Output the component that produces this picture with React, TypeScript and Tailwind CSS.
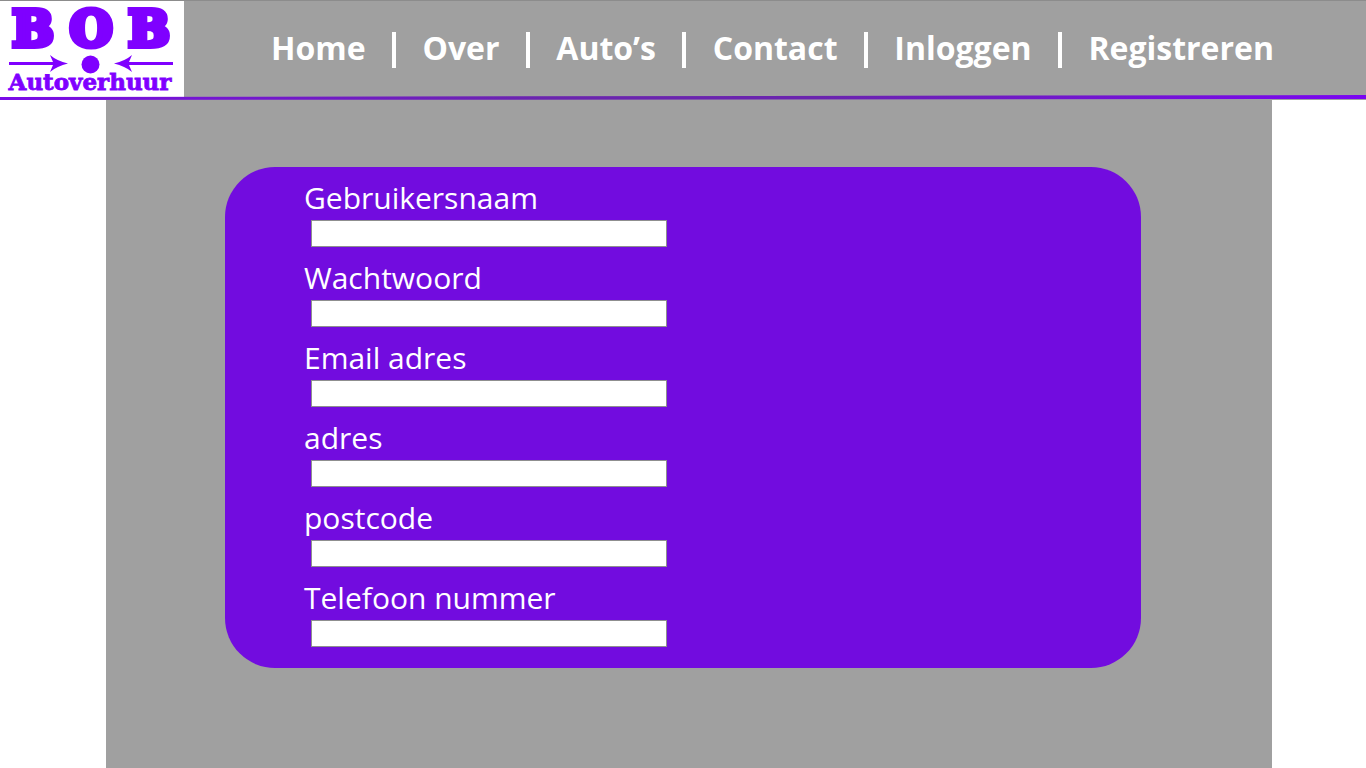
const links = [
  { label: "Home", href: "#home" },
  { label: "Over", href: "#over" },
  { label: "Auto’s", href: "#autos" },
  { label: "Contact", href: "#contact" },
  { label: "Inloggen", href: "#inloggen" },
  { label: "Registreren", href: "#registreren" },
];

const fields = [
  { id: "gebruikersnaam", label: "Gebruikersnaam", type: "text" },
  { id: "wachtwoord", label: "Wachtwoord", type: "password" },
  { id: "email", label: "Email adres", type: "email" },
  { id: "adres", label: "adres", type: "text" },
  { id: "postcode", label: "postcode", type: "text" },
  { id: "telefoon", label: "Telefoon nummer", type: "tel" },
];

function Logo() {
  return (
    <svg
      width="184"
      height="96"
      viewBox="0 0 184 96"
      role="img"
      aria-label="BOB Autoverhuur"
      className="block shrink-0 bg-white font-['DejaVu_Serif'] font-bold"
      fill="#7f00ff"
    >
      <g stroke="#7f00ff" strokeWidth="6" fontSize="49" textAnchor="middle">
        <text x="33" y="45">B</text>
        <text x="91" y="45">O</text>
        <text x="149" y="45">B</text>
      </g>
      <path d="M9 61H53L50 54Q57 60 68 62.500Q57 65 50 71L53 64H9Z" />
      <path d="M173 61H129L132 54Q125 60 114 62.500Q125 65 132 71L129 64H173Z" />
      <circle cx="90.500" cy="63.500" r="9" />
      <text x="90" y="89" fontSize="23" textAnchor="middle" stroke="#7f00ff" strokeWidth="0.800">
        Autoverhuur
      </text>
    </svg>
  );
}

export default function App() {
  return (
    <div className="flex min-h-screen flex-col bg-white font-['Open_Sans','Noto_Sans',sans-serif]">
      <header className="bg-[#a0a0a0]">
        <div className="flex border-t border-[#8c8c8c]">
          <a href="#home" className="shrink-0">
            <Logo />
          </a>
          <nav aria-label="Hoofdmenu" className="mr-[92px] ml-[87px] flex h-[94px] flex-1 items-center">
            <ul className="flex flex-1 items-center justify-between">
              {links.map((link, i) => (
                <li key={link.label} className="contents">
                  {i > 0 && <span aria-hidden="true" className="mt-1 h-9 w-1 bg-white" />}
                  <a href={link.href} className="text-[32px] leading-10 font-bold text-white">
                    {link.label}
                  </a>
                </li>
              ))}
            </ul>
          </nav>
        </div>
        <svg
          className="-mt-0.5 block h-[5px] w-full"
          viewBox="0 0 1366 5"
          preserveAspectRatio="none"
          aria-hidden="true"
        >
          <defs>
            <linearGradient id="rule" x1="0" x2="1">
              <stop offset="0" stopColor="#7a0be8" />
              <stop offset="0.400" stopColor="#6a24ae" />
              <stop offset="0.600" stopColor="#6a24ae" />
              <stop offset="1" stopColor="#7a05f2" />
            </linearGradient>
          </defs>
          <path d="M0 2L1366 0V4L0 5Z" fill="url(#rule)" />
        </svg>
      </header>

      <main className="mr-[94px] ml-[106px] flex-1 bg-[#a0a0a0] pt-[67px] pr-[131px] pb-[100px] pl-[119px]">
        <form className="flex flex-col gap-[11px] rounded-[50px] bg-[#720cdf] pt-[11px] pr-8 pb-[21px] pl-[79px]">
          {fields.map((field) => (
            <div key={field.id} className="flex flex-col items-start gap-0.5">
              <label htmlFor={field.id} className="text-[30px] leading-10 text-white">
                {field.label}
              </label>
              <input
                id={field.id}
                name={field.id}
                type={field.type}
                className="ml-[7px] h-[27px] w-full max-w-[356px] border border-[#8f8f8f] bg-white px-2 text-base text-black outline-none"
              />
            </div>
          ))}
        </form>
      </main>
    </div>
  );
}
